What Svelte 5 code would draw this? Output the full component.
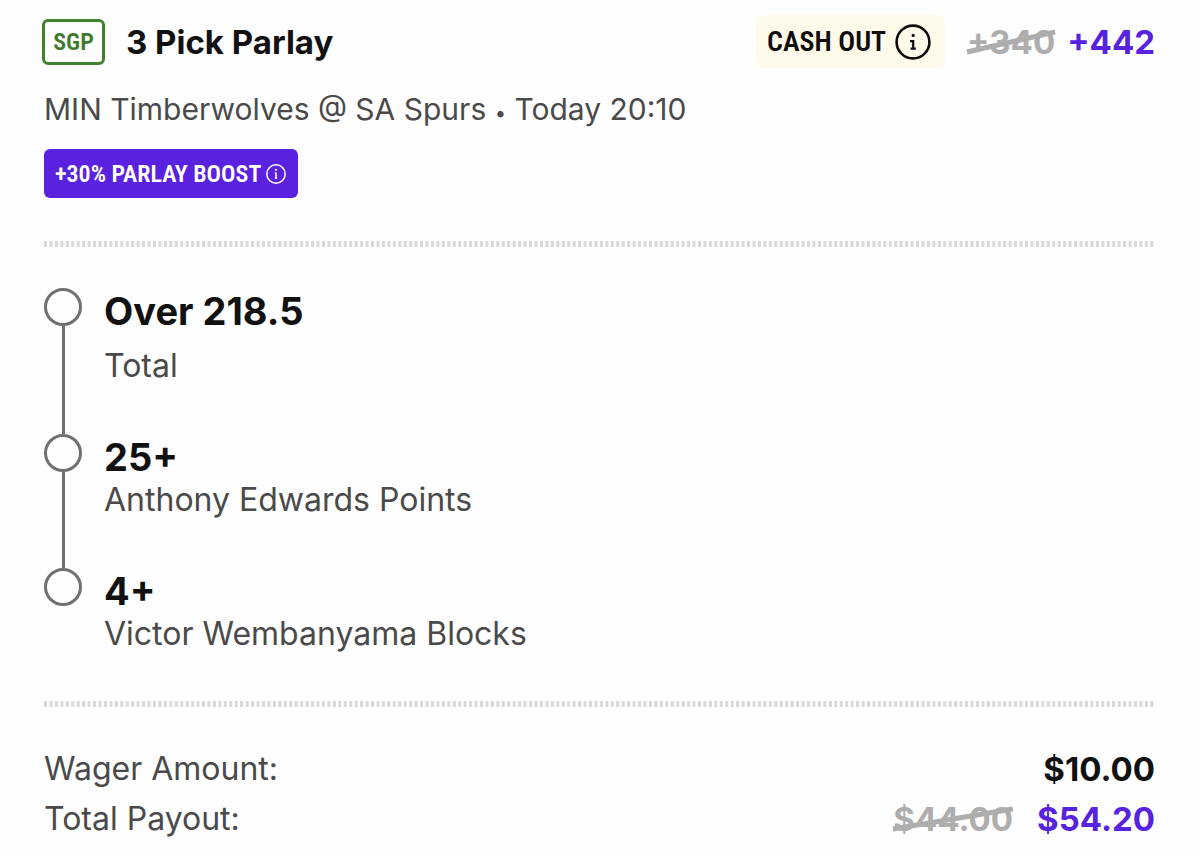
<script>
  const legs = [
    { pick: 'Over 218.5', market: 'Total', spaced: true },
    { pick: '25+', market: 'Anthony Edwards Points' },
    { pick: '4+', market: 'Victor Wembanyama Blocks' }
  ];
</script>

{#snippet divider()}
  <svg class="divider" aria-hidden="true">
    <line x1="0" y1="3" x2="100%" y2="3" stroke="#d9d9d9" stroke-width="6" stroke-dasharray="3 2.45" />
  </svg>
{/snippet}

{#snippet struck(value)}
  <s class="struck">
    {value}
    <svg viewBox="0 0 100 20" preserveAspectRatio="none" aria-hidden="true">
      <line x1="0" y1="20" x2="100" y2="0" stroke="#adadad" stroke-width="5" vector-effect="non-scaling-stroke" />
    </svg>
  </s>
{/snippet}

<main class="slip">
  <header class="top">
    <span class="sgp">SGP</span>
    <h1>3 Pick Parlay</h1>
    <button class="cash-out">
      Cash out
      <svg width="36" height="36" viewBox="0 0 36 36" fill="none" stroke="#0d0d0d" aria-hidden="true">
        <circle cx="18" cy="18" r="16.4" stroke-width="2.6" />
        <path d="M15 17.2h3.2v7.2M15.6 24.6h5.2" stroke-width="2.2" />
        <circle cx="18.2" cy="11.4" r="1.6" fill="#0d0d0d" stroke="none" />
      </svg>
    </button>
    <div class="odds">
      {@render struck('+340')}
      <strong>+442</strong>
    </div>
  </header>

  <p class="match">MIN Timberwolves @ SA Spurs <span class="dot">•</span> Today 20:10</p>

  <button class="boost">
    +30% Parlay boost
    <svg width="20" height="20" viewBox="0 0 20 20" fill="none" stroke="#fff" aria-hidden="true">
      <circle cx="10" cy="10" r="9.2" stroke-width="1.5" />
      <path d="M10 8.4v6" stroke-width="1.6" />
      <path d="M8.8 8.9h1.2M8.8 14.2h2.4" stroke-width="1" />
      <circle cx="10" cy="5.8" r="1.1" fill="#fff" stroke="none" />
    </svg>
  </button>

  {@render divider()}

  <ol class="legs">
    {#each legs as leg}
      <li class:spaced={leg.spaced}>
        <div class="rail"><i></i></div>
        <div class="leg">
          <h2>{leg.pick}</h2>
          <p>{leg.market}</p>
        </div>
      </li>
    {/each}
  </ol>

  {@render divider()}

  <dl class="totals">
    <div>
      <dt>Wager Amount:</dt>
      <dd>$10.00</dd>
    </div>
    <div>
      <dt>Total Payout:</dt>
      <dd class="boosted">{@render struck('$44.00')} <strong>$54.20</strong></dd>
    </div>
  </dl>
</main>

<style>
  :global(body) {
    background: #fefefe;
  }
  .slip {
    padding: 15px 44px 12px;
    font-family: Inter, "Liberation Sans", sans-serif;
    color: #4a4a4a;
  }
  h1, h2, p, ol, dl, dd {
    margin: 0;
    padding: 0;
  }
  strong {
    font-weight: 700;
    color: #5723de;
  }
  button {
    border: 0;
    cursor: pointer;
  }
  button svg {
    flex-shrink: 0;
  }
  .sgp, .cash-out, .boost {
    font-family: "Roboto Condensed", "Liberation Sans Narrow", sans-serif;
    text-transform: uppercase;
    white-space: nowrap;
  }
  .top {
    display: flex;
    align-items: center;
    height: 53px;
  }
  .sgp {
    box-sizing: border-box;
    width: 63px;
    height: 46px;
    margin-left: -2px;
    border: 3px solid #42822f;
    border-radius: 6px;
    color: #3d7a2b;
    font-size: 24px;
    font-weight: 600;
    line-height: 40px;
    text-align: center;
  }
  h1 {
    margin-left: 21px;
    color: #111;
    font-size: 33px;
    font-weight: 700;
  }
  .cash-out {
    display: flex;
    align-items: center;
    justify-content: space-between;
    box-sizing: border-box;
    width: 189px;
    height: 53px;
    margin-left: auto;
    padding: 0 14px 0 11px;
    border-radius: 8px;
    background: #fffaea;
    color: #0d0d0d;
    font-size: 28px;
    font-weight: 600;
  }
  .odds {
    display: flex;
    gap: 12px;
    margin-left: 22px;
    font-size: 33px;
    line-height: 40px;
  }
  .struck {
    position: relative;
    color: #adadad;
    font-weight: 700;
    line-height: 40px;
    text-decoration: none;
  }
  .struck svg {
    position: absolute;
    top: 25%;
    left: 0;
    width: 100%;
    height: 50%;
    overflow: visible;
  }
  .match {
    margin-top: 21px;
    font-size: 30px;
    line-height: 40px;
  }
  .dot {
    font-size: 20px;
    line-height: 20px;
  }
  .boost {
    display: flex;
    align-items: center;
    justify-content: space-between;
    box-sizing: border-box;
    width: 254px;
    height: 49px;
    margin: 20px 0 43px;
    padding: 0 12px 0 11px;
    border-radius: 6px;
    background: #5a22e0;
    color: #fff;
    font-size: 24px;
    font-weight: 600;
  }
  .divider {
    display: block;
    width: 100%;
    height: 6px;
  }
  .legs {
    margin: 41px 0 47px;
    list-style: none;
  }
  li {
    display: flex;
    gap: 22px;
  }
  .rail {
    display: flex;
    flex-direction: column;
    align-items: center;
  }
  .rail i {
    box-sizing: border-box;
    width: 38px;
    height: 38px;
    border: 3px solid #707070;
    border-radius: 50%;
  }
  li:not(:last-child) .rail::after {
    content: "";
    flex: 1;
    width: 3px;
    background: #707070;
  }
  li:not(:last-child) .leg {
    padding-bottom: 48px;
  }
  h2 {
    color: #111;
    font-size: 38px;
    font-weight: 700;
    line-height: 46px;
  }
  .leg p {
    font-size: 32px;
    line-height: 40px;
  }
  .spaced p {
    margin-top: 12px;
  }
  .totals {
    margin-top: 37px;
    font-size: 33px;
    line-height: 50px;
  }
  .totals div {
    display: flex;
    align-items: center;
    justify-content: space-between;
  }
  dt {
    font-size: 32px;
  }
  dd {
    color: #111;
    font-weight: 700;
  }
  .boosted {
    display: flex;
    align-items: center;
    gap: 24px;
  }
</style>
